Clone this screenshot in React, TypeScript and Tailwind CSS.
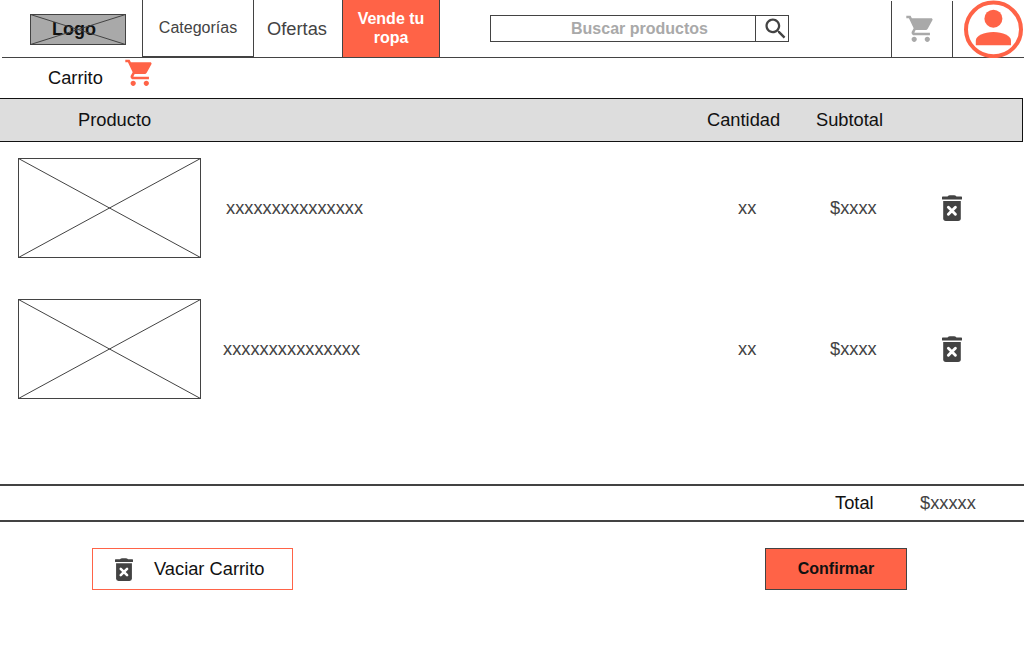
type IconProps = { className?: string };

function CartIcon({ className }: IconProps) {
  return (
    <svg viewBox="0 0 24 24" fill="currentColor" className={className}>
      <path d="M7 18c-1.1 0-1.99.9-1.99 2S5.9 22 7 22s2-.9 2-2-.9-2-2-2zM1 2v2h2l3.6 7.59-1.35 2.45c-.16.28-.25.61-.25.96 0 1.1.9 2 2 2h12v-2H7.42c-.14 0-.25-.11-.25-.25l.03-.12.9-1.63h7.45c.75 0 1.41-.41 1.75-1.03l3.58-6.49c.08-.14.12-.31.12-.48 0-.55-.45-1-1-1H5.21l-.94-2H1zm16 16c-1.1 0-1.99.9-1.99 2s.89 2 1.99 2 2-.9 2-2-.9-2-2-2z" />
    </svg>
  );
}

function SearchIcon({ className }: IconProps) {
  return (
    <svg viewBox="0 0 24 24" fill="currentColor" className={className}>
      <path d="M15.5 14h-.79l-.28-.27C15.41 12.59 16 11.11 16 9.5 16 5.91 13.09 3 9.5 3S3 5.91 3 9.5 5.91 16 9.5 16c1.61 0 3.09-.59 4.23-1.57l.27.28v.79l5 4.99L20.49 19l-4.99-5zm-6 0C7.01 14 5 11.99 5 9.5S7.01 5 9.5 5 14 7.01 14 9.5 11.99 14 9.5 14z" />
    </svg>
  );
}

function TrashIcon({ className }: IconProps) {
  return (
    <svg viewBox="0 0 20 26" preserveAspectRatio="none" className={className}>
      <path
        fill="#434343"
        d="M5.5 1.4Q6.5 .2 8 .2H12Q13.500 .2 14.500 1.400H19.300Q20 1.400 20 2.100V3.900Q20 4.600 19.300 4.600H.7Q0 4.600 0 3.900V2.100Q0 1.400 .7 1.400Z"
      />
      <path fill="#434343" d="M1.200 5.900H18.800V23.200Q18.800 25.900 16.100 25.900H3.900Q1.200 25.900 1.200 23.200Z" />
      <path d="M6.400 12.300L13.400 19.300M13.400 12.300L6.400 19.300" stroke="#fff" strokeWidth="2.900" strokeLinecap="round" />
    </svg>
  );
}

function AccountIcon({ className }: IconProps) {
  return (
    <svg viewBox="0 0 60 58" className={className}>
      <ellipse cx="29.500" cy="29.400" rx="27.500" ry="26.800" fill="#fff" stroke="#ff6347" strokeWidth="4" />
      <circle cx="29.400" cy="18.700" r="9" fill="#ff6347" />
      <path fill="#ff6347" d="M11.800 45.200v-4.500C11.800 35.500 20 32 29.400 32S47 35.500 47 40.700v4.500z" />
    </svg>
  );
}

function Placeholder() {
  return (
    <svg viewBox="0 0 183 100" className="h-[100px] w-[183px] shrink-0" fill="none" stroke="#434343">
      <rect x=".5" y=".5" width="182" height="99" />
      <path d="M.5.5l182 99M182.500.5l-182 99" />
    </svg>
  );
}

function CartRow({ inset }: { inset: string }) {
  return (
    <div className="flex h-[100px] items-center pl-[18px] text-[#434343]">
      <Placeholder />
      <span className={inset}>xxxxxxxxxxxxxxx</span>
      <span className="w-[92px] shrink-0">xx</span>
      <span className="w-[112px] shrink-0">$xxxx</span>
      <TrashIcon className="h-[26px] w-5 shrink-0" />
    </div>
  );
}

export default function App() {
  return (
    <div className="flex h-[657px] w-[1024px] flex-col overflow-hidden bg-white font-['Liberation_Sans',sans-serif] text-[18.3px] leading-5 text-[#111]">
      <header className="ml-[2px] flex h-[58px] shrink-0 border-b border-[#434343] text-[#434343]">
        <div className="relative mt-[14px] ml-[28px] flex h-[31px] w-24 items-center justify-center bg-[#a9a9a9]">
          <span className="mr-2 pb-px text-lg leading-5 font-bold text-[#111]">Logo</span>
          <svg viewBox="0 0 96 31" className="absolute inset-0" fill="none" stroke="#434343">
            <rect x=".5" y=".5" width="95" height="30" />
            <path d="M.5.5l95 30M95.500.5l-95 30" />
          </svg>
        </div>
        <nav className="ml-4 flex">
          <a className="flex w-28 items-center justify-center border-x border-b border-[#434343] text-base">Categorías</a>
          <a className="flex w-[88px] items-center pt-px pl-[13px]">Ofertas</a>
          <a className="flex w-[98px] items-center justify-center border-x border-[#434343] bg-[#ff6347] pb-px text-center text-base leading-[19px] font-bold text-white">
            Vende tu
            <br />
            ropa
          </a>
        </nav>
        <div className="mt-[15px] ml-[50px] flex h-[27px] w-[299px] border border-[#434343]">
          <span className="flex w-[264px] shrink-0 items-center justify-center pl-[33px] text-base font-bold whitespace-nowrap text-[#a9a9a9]">
            Buscar productos
          </span>
          <span className="flex w-[33px] shrink-0 border-l border-[#434343]">
            <SearchIcon className="-mt-[1.200px] ml-[5.600px] h-[27.400px] w-[27.400px] shrink-0" />
          </span>
        </div>
        <div className="mt-px ml-[102px] flex w-[62px] border-x border-[#434343]">
          <CartIcon className="mt-[12.400px] ml-[12.700px] h-[31.500px] w-[31.500px] shrink-0 text-[#a9a9a9]" />
        </div>
        <AccountIcon className="ml-[11px] h-[58px] w-[60px] shrink-0" />
      </header>

      <div className="flex h-10 shrink-0 pl-12">
        <h1 className="mt-[10px] w-[75.700px]">Carrito</h1>
        <CartIcon className="-mt-[1.300px] h-[31.500px] w-[31.500px] text-[#ff6347]" />
      </div>

      <div className="mr-px flex h-11 shrink-0 items-center border-y border-r border-[#111] bg-[#ddd] pl-[78px]">
        <span className="w-[629px]">Producto</span>
        <span className="w-[109px]">Cantidad</span>
        <span>Subtotal</span>
      </div>

      <main className="flex h-[342px] shrink-0 flex-col gap-[41px] pt-4">
        <CartRow inset="w-[537px] shrink-0 pl-[25px]" />
        <CartRow inset="w-[537px] shrink-0 pl-[22px]" />
      </main>

      <div className="flex h-[38px] shrink-0 items-center border-y-2 border-[#434343] pl-[835px]">
        <span className="w-[85px]">Total</span>
        <span className="text-[#434343]">$xxxxx</span>
      </div>

      <footer className="mt-[26px] flex h-[42px] shrink-0 justify-between pr-[117px] pl-[92px]">
        <button className="flex w-[201px] items-center border border-[#ff6347] pl-[22px] whitespace-nowrap">
          <TrashIcon className="mr-[21px] h-[23px] w-[18px] shrink-0" />
          Vaciar Carrito
        </button>
        <button className="w-[142px] border border-[#434343] bg-[#ff6347] text-base font-bold">Confirmar</button>
      </footer>
    </div>
  );
}
